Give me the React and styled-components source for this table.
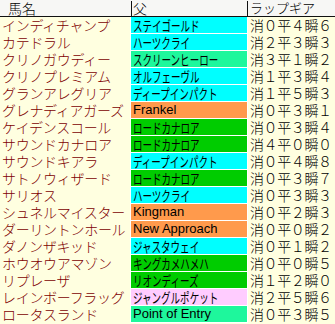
import React from "react";
import styled, { createGlobalStyle } from "styled-components";

const Global = createGlobalStyle`
  html, body { margin: 0; padding: 0; background: #ffffe0; }
  body { font-family: "Noto Sans CJK JP", "Noto Sans", sans-serif; font-weight: 300; }
`;

const Table = styled.div`
  width: 335px;
  display: flex;
  flex-direction: column;
`;

const HeaderRow = styled.div`
  display: grid;
  grid-template-columns: 131px 116px 1fr;
  height: 16px;
  background: #f7f7f5;
  border-bottom: 1px solid #111;
`;

const HeadCell = styled.div`
  font-size: ${(p) => p.$size || 14}px;
  line-height: 16px;
  color: #000;
  padding-left: ${(p) => p.$pad}px;
  white-space: nowrap;
  position: relative;
  ${(p) =>
    p.$divider &&
    `&::before { content: ""; position: absolute; left: 0; top: 1px; bottom: 0; width: 1px; background: #111; }`}
`;

const Row = styled.div`
  display: grid;
  grid-template-columns: 130px 118px 1fr;
  height: 17px;
  background: #ffffe0;
`;

const Name = styled.div`
  font-size: 14px;
  line-height: 17px;
  color: #800000;
  padding-left: 2px;
  white-space: nowrap;
  letter-spacing: -0.3px;
`;

const Sire = styled.div`
  background: ${(p) => p.$bg};
  border-left: 1px solid #fff;
  border-right: 1px solid #fff;
  border-bottom: 1px solid #fff;
  height: 16px;
  font-size: ${(p) => (p.$latin ? 13 : 14)}px;
  font-weight: 400;
  font-family: ${(p) =>
    p.$latin ? `"Liberation Sans", Arial, sans-serif` : `"Noto Sans CJK JP", sans-serif`};
  line-height: 16px;
  color: #000;
  padding-left: 2px;
  white-space: nowrap;
`;

const Narrow = styled.span`
  display: inline-block;
  transform: scaleX(0.68);
  transform-origin: left center;
`;

const Gear = styled.div`
  font-size: 14px;
  line-height: 17px;
  color: #000;
  padding-left: 2px;
  white-space: nowrap;
  letter-spacing: -0.4px;
`;

const COLORS = {
  cyan: "#00ffff",
  spring: "#1ef79c",
  orange: "#ff9a4c",
  green: "#00cc00",
  pink: "#ffccff",
};

const rows = [
  ["インディチャンプ", "ステイゴールド", "cyan", "消０平４瞬６"],
  ["カテドラル", "ハーツクライ", "cyan", "消２平３瞬３"],
  ["クリノガウディー", "スクリーンヒーロー", "spring", "消３平１瞬２"],
  ["クリノプレミアム", "オルフェーヴル", "cyan", "消１平３瞬４"],
  ["グランアレグリア", "ディープインパクト", "cyan", "消１平５瞬３"],
  ["グレナディアガーズ", "Frankel", "orange", "消０平３瞬１"],
  ["ケイデンスコール", "ロードカナロア", "green", "消０平３瞬４"],
  ["サウンドカナロア", "ロードカナロア", "green", "消４平０瞬０"],
  ["サウンドキアラ", "ディープインパクト", "cyan", "消０平４瞬８"],
  ["サトノウィザード", "ロードカナロア", "green", "消０平３瞬７"],
  ["サリオス", "ハーツクライ", "cyan", "消０平３瞬３"],
  ["シュネルマイスター", "Kingman", "orange", "消０平２瞬３"],
  ["ダーリントンホール", "New Approach", "orange", "消０平０瞬２"],
  ["ダノンザキッド", "ジャスタウェイ", "cyan", "消０平１瞬２"],
  ["ホウオウアマゾン", "キングカメハメハ", "green", "消０平０瞬５"],
  ["リプレーザ", "リオンディーズ", "green", "消１平２瞬０"],
  ["レインボーフラッグ", "ジャングルポケット", "pink", "消２平５瞬６"],
  ["ロータスランド", "Point of Entry", "spring", "消０平３瞬５"],
];

export default function App() {
  return (
    <>
      <Global />
      <Table>
        <HeaderRow>
          <HeadCell $pad={8}>馬名</HeadCell>
          <HeadCell $pad={2} $divider>父</HeadCell>
          <HeadCell $pad={3} $size={13} $divider>ラップギア</HeadCell>
        </HeaderRow>
        {rows.map(([name, sire, color, gear]) => {
          const latin = /^[A-Za-z]/.test(sire);
          return (
            <Row key={name}>
              <Name>{name}</Name>
              <Sire $bg={COLORS[color]} $latin={latin}>
                {latin ? sire : <Narrow>{sire}</Narrow>}
              </Sire>
              <Gear>{gear}</Gear>
            </Row>
          );
        })}
      </Table>
    </>
  );
}
